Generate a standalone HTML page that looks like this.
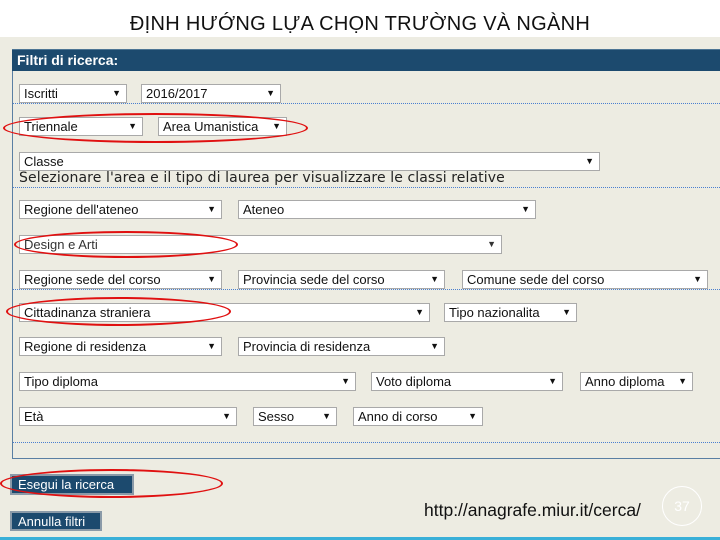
<!DOCTYPE html>
<html><head><meta charset="utf-8"><style>
*{margin:0;padding:0;box-sizing:border-box}
body{width:720px;height:540px;position:relative;overflow:hidden;background:#fff;font-family:"Liberation Sans",sans-serif}
.bg{position:absolute;left:0;top:37px;width:720px;height:503px;background:#edece2}
.title{position:absolute;top:13px;left:0;width:720px;text-align:center;font-size:20px;color:#111;letter-spacing:0.3px}
.hdr{position:absolute;left:12px;top:49px;width:708px;height:22px;background:#1c4a6e;border-top:1px solid #4d7594;color:#fff;font-weight:bold;font-size:14px;padding:2px 0 0 5px}
.panel{position:absolute;left:12px;top:71px;width:710px;height:388px;border-left:1px solid #5a7fa3;border-bottom:1px solid #5a7fa3}
.dot{position:absolute;left:13px;width:707px;border-top:1px dotted #4a7fd0}
.s{position:absolute;height:19px;background:#fff;border:1px solid #a9a9a9;font-size:13px;color:#111;padding:1px 0 0 4px;white-space:nowrap;overflow:hidden}
.s:after{content:"▼";position:absolute;right:5px;top:3px;font-size:9px}
.note{position:absolute;left:19px;top:170px;font-family:"DejaVu Sans",sans-serif;font-size:14px;color:#222;letter-spacing:0.1px}
.btn{position:absolute;background:#1c4a6e;color:#fff;font-size:13px;border:2px solid #8a9aa8;padding:1px 6px}
.ell{position:absolute;border:2px solid #e01010;border-radius:50%}
.url{position:absolute;left:424px;top:500px;font-size:17.5px;color:#111}
.pg{position:absolute;left:662px;top:486px;width:40px;height:40px;border:1.5px solid #fff;border-radius:50%;color:#fff;font-size:14px;text-align:center;line-height:38px}
.bar{position:absolute;left:0;top:537px;width:720px;height:3px;background:#3ab0d8}
</style></head><body>
<div class="bg"></div>
<div class="title">ĐỊNH HƯỚNG LỰA CHỌN TRƯỜNG VÀ NGÀNH</div>
<div class="hdr">Filtri di ricerca:</div>
<div class="panel"></div>
<div class="dot" style="top:103px"></div>
<div class="dot" style="top:187px"></div>
<div class="dot" style="top:289px"></div>
<div class="dot" style="top:442px"></div>

<div class="s" style="left:19px;top:84px;width:108px">Iscritti</div>
<div class="s" style="left:141px;top:84px;width:140px">2016/2017</div>
<div class="s" style="left:19px;top:117px;width:124px">Triennale</div>
<div class="s" style="left:158px;top:117px;width:129px">Area Umanistica</div>
<div class="s" style="left:19px;top:152px;width:581px">Classe</div>
<div class="note">Selezionare l'area e il tipo di laurea per visualizzare le classi relative</div>
<div class="s" style="left:19px;top:200px;width:203px">Regione dell'ateneo</div>
<div class="s" style="left:238px;top:200px;width:298px">Ateneo</div>
<div class="s" style="left:19px;top:235px;width:483px;color:#333">Design e Arti</div>
<div class="s" style="left:19px;top:270px;width:203px">Regione sede del corso</div>
<div class="s" style="left:238px;top:270px;width:207px">Provincia sede del corso</div>
<div class="s" style="left:462px;top:270px;width:246px">Comune sede del corso</div>
<div class="s" style="left:19px;top:303px;width:411px">Cittadinanza straniera</div>
<div class="s" style="left:444px;top:303px;width:133px">Tipo nazionalita</div>
<div class="s" style="left:19px;top:337px;width:203px">Regione di residenza</div>
<div class="s" style="left:238px;top:337px;width:207px">Provincia di residenza</div>
<div class="s" style="left:19px;top:372px;width:337px">Tipo diploma</div>
<div class="s" style="left:371px;top:372px;width:192px">Voto diploma</div>
<div class="s" style="left:580px;top:372px;width:113px">Anno diploma</div>
<div class="s" style="left:19px;top:407px;width:218px">Età</div>
<div class="s" style="left:253px;top:407px;width:84px">Sesso</div>
<div class="s" style="left:353px;top:407px;width:130px">Anno di corso</div>

<div class="btn" style="left:10px;top:474px;width:124px;height:21px">Esegui la ricerca</div>
<div class="btn" style="left:10px;top:511px;width:92px;height:20px">Annulla filtri</div>

<div class="ell" style="left:3px;top:113px;width:305px;height:30px"></div>
<div class="ell" style="left:14px;top:231px;width:224px;height:27px"></div>
<div class="ell" style="left:6px;top:297px;width:225px;height:29px"></div>
<div class="ell" style="left:0px;top:469px;width:223px;height:29px"></div>

<div class="url">http://anagrafe.miur.it/cerca/</div>
<div class="pg">37</div>
<div class="bar"></div>
</body></html>
